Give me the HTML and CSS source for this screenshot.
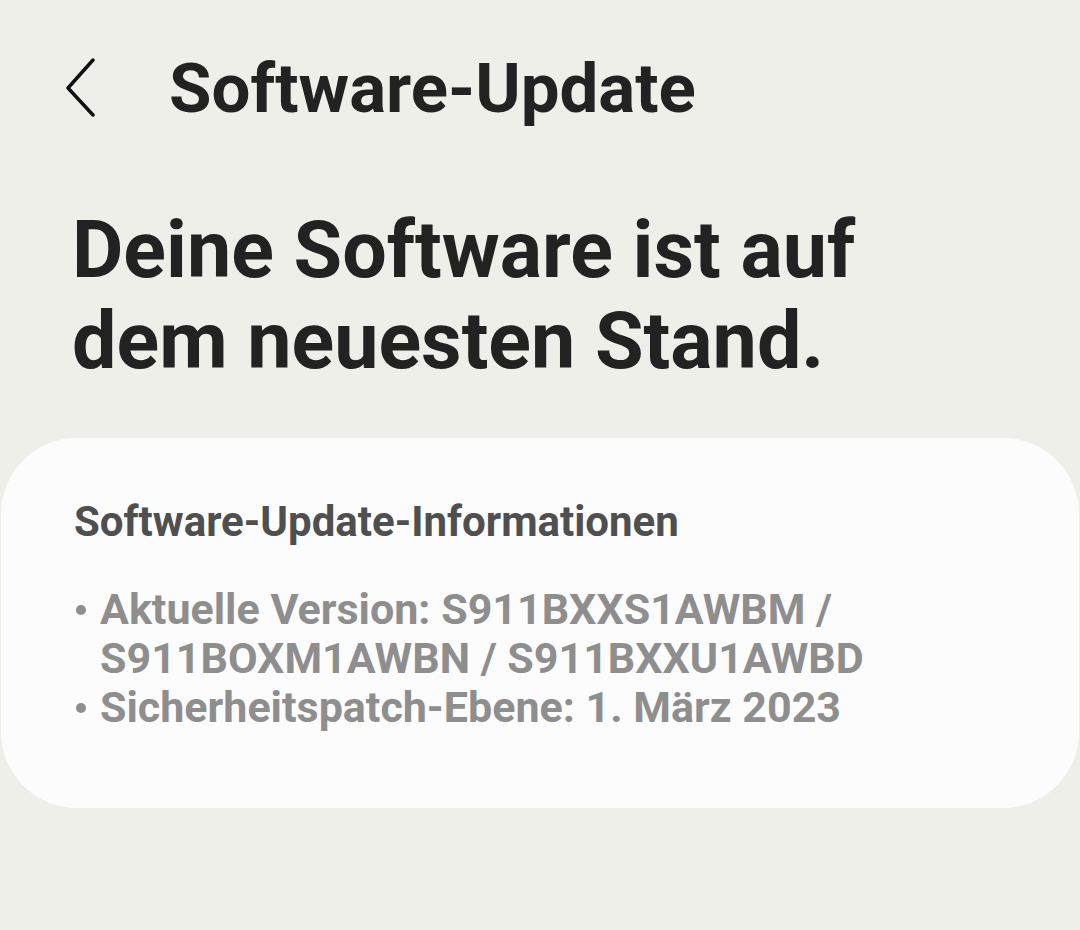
FILE: index.html
```html
<!DOCTYPE html>
<html lang="de">
<head>
    <meta charset="UTF-8">
    <meta name="viewport" content="width=device-width, initial-scale=1.0">
    <title>Software-Update</title>
    <link rel="stylesheet" href="styles.css">
</head>
<body>
    <div class="top-bar">
        <svg class="back" width="34" height="60" viewBox="0 0 34 60">
            <path d="M29 3 L4 31 L29 58" fill="none" stroke="#111" stroke-width="3.5" stroke-linecap="round" stroke-linejoin="round"/>
        </svg>
        <h1 class="title">Software-Update</h1>
    </div>

    <h2 class="status">Deine Software ist auf dem neuesten Stand.</h2>

    <div class="card">
        <div class="card-title">Software-Update-Informationen</div>
        <ul class="info-list">
            <li>Aktuelle Version: S911BXXS1AWBM / S911BOXM1AWBN / S911BXXU1AWBD</li>
            <li>Sicherheitspatch-Ebene: 1. März 2023</li>
        </ul>
    </div>
</body>
</html>
```

FILE: styles.css
```css
body {
    margin: 0;
    background-color: #efefea;
    font-family: Roboto, "Liberation Sans", sans-serif;
    color: #222;
}

.top-bar {
    display: flex;
    align-items: center;
    height: 176px;
    padding-left: 64px;
}

.back {
    margin-right: 71px;
    margin-top: -2px;
}

.title {
    margin: 0;
    font-size: 69px;
    font-weight: 700;
    color: #222;
}

.status {
    margin: 29px 0 0 72px;
    width: 900px;
    font-size: 79px;
    font-weight: 700;
    line-height: 91px;
    color: #222;
}

.card {
    margin: 51px 1px 0 1px;
    background-color: #fcfcfc;
    border-radius: 76px;
    padding: 59px 73px 76px 73px;
}

.card-title {
    font-size: 42px;
    font-weight: 700;
    color: #4f4f4f;
}

.info-list {
    list-style: none;
    margin: 39px 0 0 0;
    padding: 0;
}

.info-list li {
    position: relative;
    padding-left: 26px;
    font-size: 43px;
    font-weight: 700;
    line-height: 49px;
    color: #8e8e8e;
}

.info-list li::before {
    content: "";
    position: absolute;
    left: 2px;
    top: 20px;
    width: 10px;
    height: 10px;
    border-radius: 50%;
    background-color: #8e8e8e;
}
```
